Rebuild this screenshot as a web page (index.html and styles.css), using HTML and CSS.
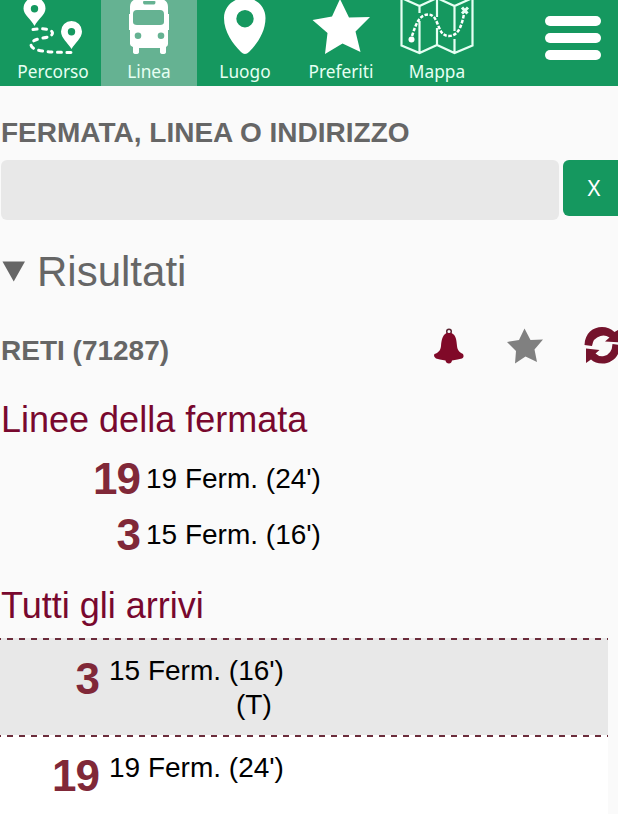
FILE: index.html
```html
<!DOCTYPE html>
<html lang="it">
<head>
    <meta charset="UTF-8">
    <meta name="viewport" content="width=device-width, initial-scale=1.0">
    <title>Linea</title>
    <link rel="stylesheet" href="styles.css">
</head>
<body>

<nav class="navbar">
    <a class="tab">
        <svg width="96" height="62" viewBox="0 0 96 62">
            <path fill="#fff" fill-rule="evenodd" d="M29.5 26C26 19 18.500 15 18.500 8.500a11 11 0 0 1 22 0C40.500 15 33 19 29.500 26zM29.500 5a3.700 3.700 0 1 0 0 7.400a3.700 3.700 0 1 0 0-7.400z"/>
            <path fill="#fff" fill-rule="evenodd" d="M66.500 49C63 43 56 38 56 31.500a10.500 10.500 0 0 1 21 0C77 38 70 43 66.500 49zM66.500 28a3.700 3.700 0 1 0 0 7.400a3.700 3.700 0 1 0 0-7.400z"/>
            <path class="route" d="M28 29.500C38 28 47 29 47.500 33C47 40 27 36 26 45C27 51 41 52.500 69 52.500"/>
        </svg>
        <span>Percorso</span>
    </a>
    <a class="tab active">
        <svg width="96" height="62" viewBox="0 0 96 62">
            <path fill="#fff" fill-rule="evenodd" d="M36-1H60Q67 0 67 7V14H68V30H67V44Q67 46 65 47V52Q65 54 62 54Q59 54 59 52V48H38V52Q38 54 35 54Q32 54 32 52V47Q29 46 29 44V30H28V14H29V7Q29 0 36-1zM42 1.500Q42 4.500 43.500 4.500H53Q54.500 4.500 54.500 1.500L53.500 1H43zM36 10Q32 10 32 14V22Q32 25 36 25H59Q63 25 63 22V14Q63 10 59 10zM37 32.500a3.300 3.300 0 1 0 0 6.600a3.300 3.300 0 1 0 0-6.600zM60 32.500a3.300 3.300 0 1 0 0 6.600a3.300 3.300 0 1 0 0-6.600z"/>
        </svg>
        <span>Linea</span>
    </a>
    <a class="tab">
        <svg width="96" height="62" viewBox="0 0 96 62">
            <path fill="#fff" fill-rule="evenodd" d="M48-2C60-2 68.500 7 68.500 18C68.500 32 60 44 52 52Q48 56 44 52C36 44 27 32 27 18C27 7 36-2 48-2zM48 10a8.700 8.700 0 1 0 0 17.400a8.700 8.700 0 1 0 0-17.400z"/>
        </svg>
        <span>Luogo</span>
    </a>
    <a class="tab">
        <svg width="96" height="62" viewBox="0 0 96 62">
            <path fill="#fff" d="M47-1L56 17.500L77 17L62.500 31.500L67.500 52L49.500 43.500L32 54L34.500 33L19.500 20L39 16.500z"/>
        </svg>
        <span>Preferiti</span>
    </a>
    <a class="tab">
        <svg width="96" height="62" viewBox="0 0 96 62" fill="none" stroke="#e6fff3" stroke-width="2.200">
            <path d="M12.500-2L30.500 6L48-2L65.500 6L83.500-2V45.500L65.500 53L48 45L30.500 53L12.500 45.500zM30.500 6V13M30.500 21V53M48-2V17M48 28V45M65.500 6V31M65.500 39V53"/>
            <path class="trail" d="M23 36C27 24 30 15 39 14.500C51 14.500 47 36 60 36C70 36 73 24 75 14"/>
            <circle cx="22.500" cy="39.500" r="3" fill="#fff" stroke="none"/>
            <path stroke-width="3" d="M73 7.500L78.500 13.500M79 7.500L73 13.500"/>
        </svg>
        <span>Mappa</span>
    </a>
    <div class="menu">
        <i></i>
        <i></i>
        <i></i>
    </div>
</nav>

<main>
    <h4 class="search-title">FERMATA, LINEA O INDIRIZZO</h4>
    <div class="search">
        <input type="text" class="search-input">
        <button class="clear">X</button>
    </div>

    <h2 class="results"><svg width="24" height="22" viewBox="0 0 24 22"><path fill="#666" d="M0.500 0.500H23L11.700 20.500z"/></svg>Risultati</h2>

    <div class="stop">
        <h4>RETI (71287)</h4>
        <svg class="bell" width="32" height="36" viewBox="0 0 32 36">
            <circle cx="16" cy="3.500" r="2.300" fill="none" stroke="#5c2634" stroke-width="1.500"/>
            <path fill="#800928" d="M13.500 5H18.500C23 7 23.500 12 24 18C24.500 22 26 24 30 26Q31.500 29 29 30.500Q25 31.500 19 32.500Q18.500 35.500 16 35.500Q13 35.500 12.500 32.500Q6 31.500 3 30.500Q0 28 1.500 26C6 24.500 7.500 22 8 18C8.500 12 9.500 7 13.500 5z"/>
        </svg>
        <svg class="fav" width="38" height="36" viewBox="0 0 38 36">
            <path fill="#808080" d="M18.500 0.500L24.500 12L37 11.500L28.500 21.500L31 34L19.500 28.500L9 35.500L10 23L1 14L13 12z"/>
        </svg>
        <svg class="refresh" width="38" height="38" viewBox="0 0 38 38">
            <path fill="#74132c" d="M0.500 18C1 6 9 0 18 0Q25 0 30.500 5L36 2V15.500L21 14.500L25.500 10.500Q21 7.500 16.500 9Q9 11 8 19z"/>
            <path fill="#74132c" d="M36 18C36 30 27 36.500 18.500 36.500Q11 36.500 7 32.500L2 36V21.500L15.500 23L11.500 26.500Q15 30 20 29Q28 27 28.500 17z"/>
        </svg>
    </div>

    <h3>Linee della fermata</h3>
    <div class="lines">
        <div class="line"><b>19</b><span>19 Ferm. (24')</span></div>
        <div class="line"><b>3</b><span>15 Ferm. (16')</span></div>
    </div>

    <h3>Tutti gli arrivi</h3>
    <div class="arrivals">
        <div class="arrival gray"><b>3</b><div>15 Ferm. (16')<span class="note">(T)</span></div></div>
        <div class="arrival"><b>19</b><div>19 Ferm. (24')</div></div>
    </div>
</main>

</body>
</html>
```
FILE: styles.css
```css
* {
    box-sizing: border-box;
}
html {
    overflow: hidden;
}
body {
    margin: 0;
    height: 814px;
    overflow: hidden;
    font-family: "Liberation Sans", Arial, sans-serif;
    background-color: #fafafa;
}
h2, h3, h4 {
    margin: 0;
}
.navbar {
    display: flex;
    height: 86px;
    padding-left: 5px;
    background-color: #15985f;
}
.tab {
    width: 96px;
    color: #e6fff3;
    font: 17.3px/20px "Noto Sans", sans-serif;
    text-align: center;
}
.tab svg {
    display: block;
}
.tab span {
    display: block;
}
.active {
    background-color: #65b292;
}
.route {
    fill: none;
    stroke: #fff;
    stroke-width: 3;
    stroke-linecap: round;
    stroke-dasharray: 4 5.5;
}
.trail {
    stroke: #fff;
    stroke-width: 2.5;
    stroke-dasharray: 3.5 1.5;
}
.menu {
    display: flex;
    flex-direction: column;
    gap: 7px;
    width: 56px;
    margin: 16px 0 0 60px;
}
.menu i {
    height: 10px;
    border-radius: 5px;
    background: #fff;
}
h4 {
    color: #666;
    font-size: 28px;
    line-height: 32px;
}
.search-title {
    padding: 31px 0 0 1px;
}
.search {
    display: flex;
    gap: 4px;
    margin: 11px 0 0 1px;
}
.search-input {
    flex: none;
    width: 558px;
    height: 60px;
    border: none;
    border-radius: 6px;
    background-color: #e8e8e8;
}
.clear {
    flex: none;
    width: 62px;
    height: 56px;
    padding-bottom: 3px;
    border: none;
    border-radius: 6px;
    background-color: #15985f;
    color: #fff;
    font: 22px "Noto Sans", sans-serif;
}
.results {
    display: flex;
    align-items: center;
    height: 48px;
    margin-top: 28px;
    padding-left: 2px;
    color: #666;
    font-size: 42px;
    font-weight: normal;
}
.results svg {
    margin-right: 11px;
}
.stop {
    display: flex;
    height: 38px;
    margin-top: 31px;
    padding-left: 1px;
}
.stop h4 {
    flex: none;
    width: 432px;
    padding-top: 8px;
}
.stop svg {
    flex: none;
}
.bell {
    margin-top: 1px;
}
.fav {
    margin: 1px 0 0 41px;
}
.refresh {
    margin-left: 40px;
}
h3 {
    height: 42px;
    padding-left: 1px;
    color: #78082e;
    font-size: 36px;
    font-weight: normal;
    line-height: 42px;
}
.stop + h3 {
    margin-top: 34px;
}
.lines {
    margin: 9px 0 23px;
}
.line {
    display: flex;
    height: 56px;
    font-size: 28px;
    line-height: 58px;
}
b {
    color: #802838;
    font-size: 44px;
    letter-spacing: -1px;
    text-align: right;
}
.line b {
    width: 140px;
    margin-right: 6px;
    line-height: 57px;
}
.arrivals {
    width: 608px;
    margin-top: 11px;
}
.arrival {
    display: flex;
    height: 97px;
    padding-top: 16px;
    background: repeating-linear-gradient(90deg, #6b2c3b 0 1px, transparent 1px 7px, #6b2c3b 7px 12px) 0 0 / 100% 2px no-repeat #fff;
    font-size: 28px;
    line-height: 34px;
}
.gray {
    background-color: #e8e8e8;
}
.arrival b {
    width: 99px;
    margin-right: 10px;
    line-height: 49px;
}
.note {
    display: block;
    padding-left: 127px;
}
```
